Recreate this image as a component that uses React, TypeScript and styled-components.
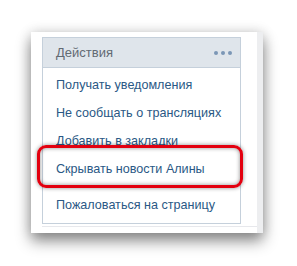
import React from 'react';
import styled, { createGlobalStyle } from 'styled-components';

const menuItems: string[] = [
  'Получать уведомления',
  'Не сообщать о трансляциях',
  'Добавить в закладки',
  'Скрывать новости Алины',
];

export default function App() {
  return (
    <>
      <GlobalStyle />
      <Page>
        <Frame>
          <Content>
            <Menu>
              <Header>
                <HeaderTitle>Действия</HeaderTitle>
                <Dots>
                  <Dot />
                  <Dot />
                  <Dot />
                </Dots>
              </Header>
              <List>
                {menuItems.map((label) => (
                  <Item key={label}>{label}</Item>
                ))}
                <Separator />
                <Item>Пожаловаться на страницу</Item>
              </List>
              <Highlight />
            </Menu>
            <BottomLine />
          </Content>
          <SideStrip />
        </Frame>
      </Page>
    </>
  );
}

const GlobalStyle = createGlobalStyle`
  body {
    margin: 0;
    background: #ffffff;
    font-family: "Liberation Sans", Arial, sans-serif;
  }
`;

const Page = styled.div`
  padding: 32px 0 0 31px;
  height: 266px;
  box-sizing: border-box;
`;

const Frame = styled.div`
  display: flex;
  width: 232px;
  height: 201px;
  background: #ffffff;
  box-shadow: 0 8px 14px rgba(0, 0, 0, 0.45), 0 0 12px rgba(0, 0, 0, 0.14);
`;

const Content = styled.div`
  flex: 1;
  display: flex;
  flex-direction: column;
  padding: 5px 0 0 11px;
`;

const SideStrip = styled.div`
  width: 6px;
  background: #edeef0;
`;

const Menu = styled.div`
  position: relative;
  width: 199px;
  height: 187px;
  box-sizing: border-box;
  border: 1px solid #c5d0db;
  background: #ffffff;
`;

const Header = styled.div`
  display: flex;
  align-items: center;
  justify-content: space-between;
  height: 29px;
  padding: 0 8px 0 13px;
  background: #dfe5eb;
  border-bottom: 1px solid #c5d0db;
`;

const HeaderTitle = styled.div`
  font-size: 13px;
  color: #626a73;
`;

const Dots = styled.div`
  display: flex;
  gap: 3px;
`;

const Dot = styled.span`
  width: 4px;
  height: 4px;
  border-radius: 50%;
  background: #7b97b6;
`;

const List = styled.div`
  display: flex;
  flex-direction: column;
  padding-top: 3px;
`;

const Item = styled.div`
  height: 28px;
  line-height: 28px;
  padding-left: 13px;
  font-size: 12.6px;
  color: #2a5885;
  white-space: nowrap;
`;

const Separator = styled.div`
  height: 1px;
  margin: 3px 0 4px;
  background: #eef0f3;
`;

const Highlight = styled.div`
  position: absolute;
  left: -6px;
  top: 107px;
  width: 206px;
  height: 43px;
  box-sizing: border-box;
  border: 3px solid #e3000f;
  border-radius: 9px;
  box-shadow: 0 0 4px rgba(0, 0, 0, 0.45), inset 0 0 4px rgba(0, 0, 0, 0.45);
`;

const BottomLine = styled.div`
  height: 1px;
  margin-top: 2px;
  background: #e7e8ec;
`;
